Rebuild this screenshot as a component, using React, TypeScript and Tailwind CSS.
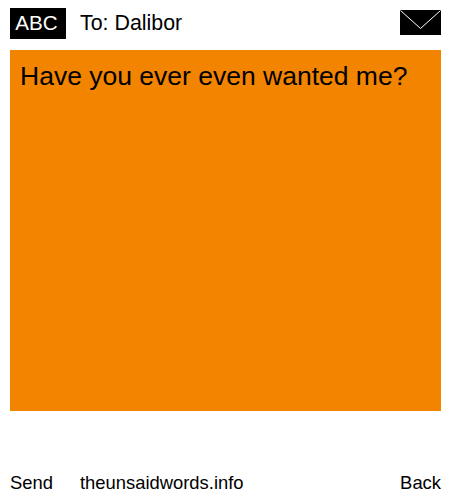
export default function App() {
  return (
    <div className="flex h-[500px] w-[450px] flex-col bg-white pl-2.5 pr-[9px] font-['Liberation_Sans',Arial,sans-serif] text-black">
      <header className="flex h-[50px] items-start">
        <div className="mt-2 flex h-[31px] w-14 items-center justify-center bg-black pr-[3px] text-[20.6px] text-white">ABC</div>
        <div className="ml-3.5 mt-2 flex h-[31px] items-center text-[21.4px]">To: Dalibor</div>
        {/* envelope */}
        <svg className="ml-auto mt-2.5" width="41" height="25" viewBox="0 0 41 25">
          <rect width="41" height="25" fill="#000" />
          <path d="M0.5 0.5 L20.5 18.5 L40.5 0.5" fill="none" stroke="#fff" strokeWidth="1" />
        </svg>
      </header>

      <main className="h-[361px] bg-[#f28400] px-2.5 py-1.5">
        <p className="text-[26.5px] leading-[40px]">Have you ever even wanted me?</p>
      </main>

      <footer className="mt-[60px] flex items-center text-[18.4px] leading-[24px]">
        <span>Send</span>
        <span className="ml-[27px]">theunsaidwords.info</span>
        <span className="ml-auto">Back</span>
      </footer>
    </div>
  );
}
